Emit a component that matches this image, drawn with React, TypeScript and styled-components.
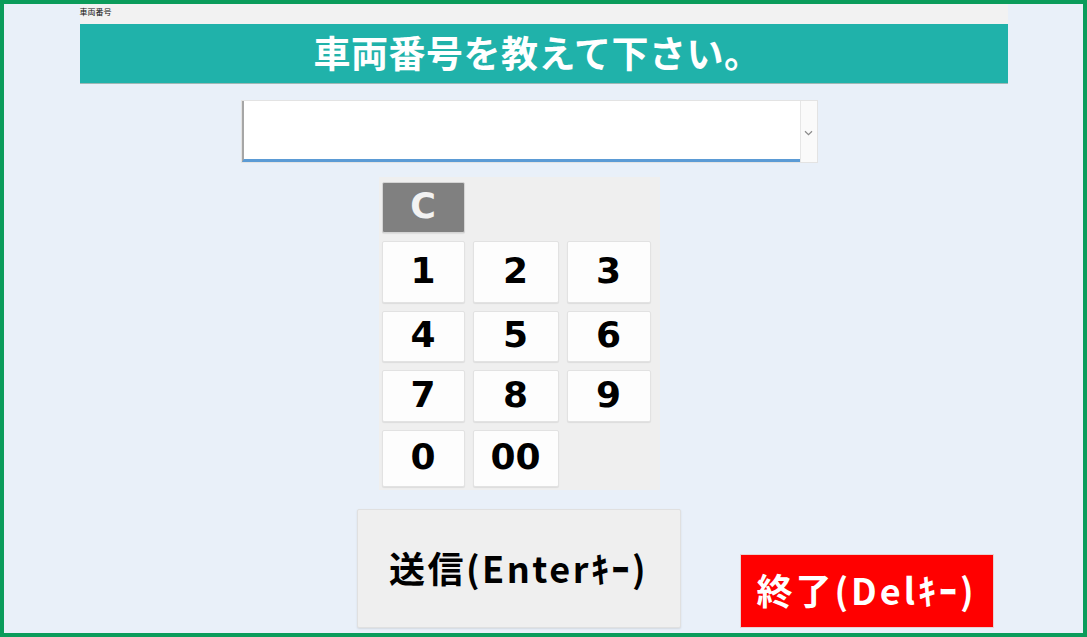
import React, { useState } from 'react';
import styled, { createGlobalStyle } from 'styled-components';

const GlobalStyle = createGlobalStyle`
  html, body {
    margin: 0;
    padding: 0;
    background: #e9f0f9;
  }
  * {
    box-sizing: border-box;
  }
`;

const JP = `"Noto Sans CJK JP", "Noto Sans", sans-serif`;

const keys = ['1', '2', '3', '4', '5', '6', '7', '8', '9', '0', '00'];

const App: React.FC = () => {
  const [value, setValue] = useState('');

  const press = (k: string) => setValue(v => v + k);

  return (
    <Frame>
      <GlobalStyle />
      <Column>
        <Caption>車両番号</Caption>
        <Title>車両番号を教えて下さい。</Title>
        <ComboBox>
          <ComboInput value={value} onChange={e => setValue(e.target.value)} />
          <ComboArrow>
            <svg width="9" height="6" viewBox="0 0 9 6">
              <path d="M1 1.2 L4.5 4.6 L8 1.2" fill="none" stroke="#8a8a8a" strokeWidth="1.2" />
            </svg>
          </ComboArrow>
        </ComboBox>
        <Keypad>
          <ClearKey onClick={() => setValue('')}>C</ClearKey>
          {keys.map(k => (
            <Key key={k} onClick={() => press(k)}>
              {k}
            </Key>
          ))}
        </Keypad>
        <Actions>
          <SendButton>送信(Enterｷｰ)</SendButton>
          <QuitButton>終了(Delｷｰ)</QuitButton>
        </Actions>
      </Column>
    </Frame>
  );
};

const Frame = styled.div`
  width: 1087px;
  height: 637px;
  border: 4px solid #0b9c5b;
  background: #e9f0f9;
  overflow: hidden;
`;

const Column = styled.div`
  width: 928px;
  margin: 0 auto;
  display: flex;
  flex-direction: column;
`;

const Caption = styled.div`
  height: 20px;
  background: #f2f2f2;
  font-family: ${JP};
  font-size: 8px;
  line-height: 16px;
  color: #111;
`;

const Title = styled.div`
  height: 60px;
  background: #20b2aa;
  border-bottom: 1px solid #9fb8b6;
  color: #fff;
  font-family: ${JP};
  font-weight: 700;
  font-size: 37px;
  letter-spacing: 0.5px;
  line-height: 56px;
  text-align: center;
  padding-right: 12px;
`;

const ComboBox = styled.div`
  margin: 16px 0 0 161px;
  width: 577px;
  height: 63px;
  display: flex;
  background: #fff;
  border: 1px solid #e3e3e3;
`;

const ComboInput = styled.input`
  flex: 1;
  border: none;
  border-left: 2px solid #a6a6a6;
  border-bottom: 3px solid #5b9bd5;
  outline: none;
  font-family: ${JP};
  font-size: 24px;
  padding: 0 8px;
  background: #fff;
`;

const ComboArrow = styled.div`
  width: 17px;
  background: #fafafa;
  border-left: 1px solid #e6e6e6;
  display: flex;
  align-items: center;
  justify-content: center;
  padding-top: 2px;
`;

const Keypad = styled.div`
  margin: 14px 0 0 299px;
  width: 281px;
  background: #efefef;
  padding: 5px 7px 3px 3px;
  display: grid;
  grid-template-columns: 83px 86px 84px;
  grid-template-rows: 51px 62px 51px 52px 57px;
  column-gap: 8px;
  row-gap: 8px;
  & > :first-child {
    grid-column: 1 / 2;
  }
  & > :nth-child(2) {
    grid-column: 1 / 2;
  }
`;

const Key = styled.button`
  background: #fdfdfd;
  border: 1px solid #e2e2e2;
  border-radius: 2px;
  box-shadow: 0 1px 1px rgba(0, 0, 0, 0.08);
  font-family: "DejaVu Sans", Verdana, sans-serif;
  font-weight: 700;
  font-size: 36px;
  color: #000;
  padding: 0 0 4px;
  cursor: pointer;
`;

const ClearKey = styled(Key)`
  background: #808080;
  border-color: #d4d4d4;
  color: #f2f2f2;
  font-size: 35px;
`;

const Actions = styled.div`
  margin: 19px 0 0 277px;
  display: flex;
  align-items: flex-end;
  gap: 59px;
`;

const SendButton = styled.button`
  width: 324px;
  height: 119px;
  background: #efefef;
  border: 1px solid #e0e0e0;
  border-radius: 2px;
  box-shadow: 0 1px 2px rgba(0, 0, 0, 0.1);
  font-family: ${JP};
  font-weight: 700;
  font-size: 36px;
  letter-spacing: 2.5px;
  color: #000;
  padding: 0 0 4px;
  cursor: pointer;
`;

const QuitButton = styled.button`
  width: 254px;
  height: 74px;
  background: #ff0000;
  border: 1px solid #e8d0d0;
  font-family: ${JP};
  font-weight: 700;
  font-size: 36px;
  letter-spacing: 3px;
  color: #fff;
  padding: 0 0 4px;
  cursor: pointer;
`;

export default App;
